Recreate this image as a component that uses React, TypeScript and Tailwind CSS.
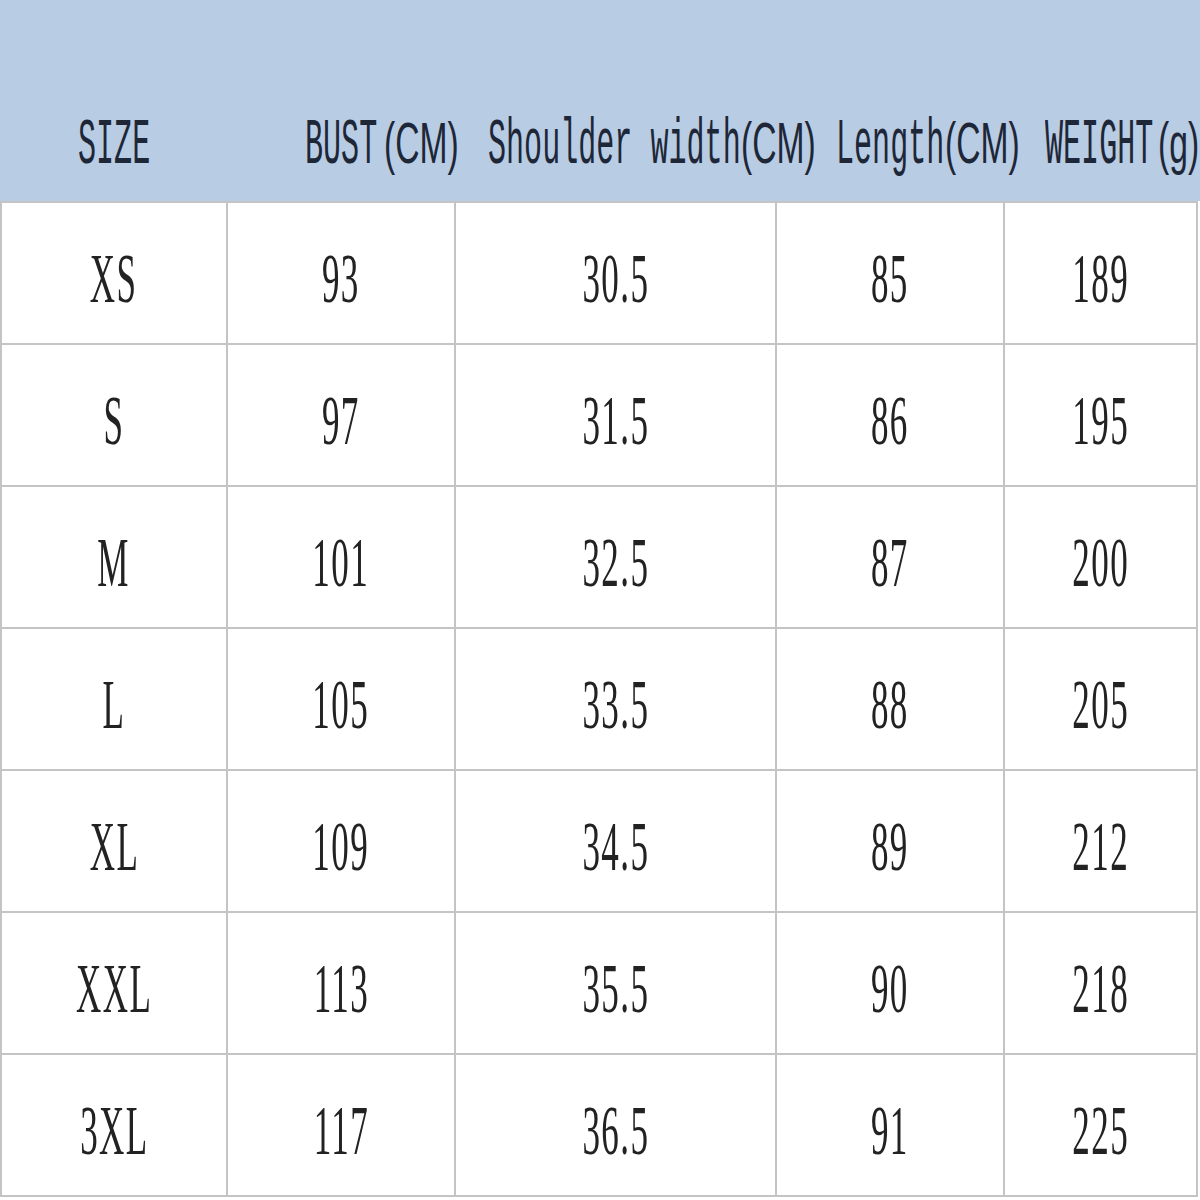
import React from "react";

type Row = [string, string, string, string, string];

const rows: Row[] = [
  ["XS", "93", "30.5", "85", "189"],
  ["S", "97", "31.5", "86", "195"],
  ["M", "101", "32.5", "87", "200"],
  ["L", "105", "33.5", "88", "205"],
  ["XL", "109", "34.5", "89", "212"],
  ["XXL", "113", "35.5", "90", "218"],
  ["3XL", "117", "36.5", "91", "225"],
];

// header pieces: [text, box width, mono?]
const head: [string, string, boolean][] = [
  ["SIZE", "w-[227px]", true],
  ["BUST", "w-[79px]", true],
  ["(CM)", "w-[104px]", false],
  ["Shoulder width", "w-[253px]", true],
  ["(CM)", "w-[95px]", false],
  ["Length", "w-[109px]", true],
  ["(CM)", "w-[100px]", false],
  ["WEIGHT", "w-[113px]", true],
  ["(g)", "w-[40px]", false],
];

export default function App() {
  return (
    <div className="w-[1200px] h-[1200px] overflow-hidden bg-white">
      <div className="h-[201px] bg-[#b8cce4] flex items-baseline pt-[114px] pl-[78px] whitespace-nowrap text-[#1e2737]">
        {head.map(([t, w, mono], i) => (
          <div key={i} className={`${w} shrink-0`}>
            {mono ? (
              <span className="inline-block origin-left scale-x-[0.47] text-[64px] leading-none font-['Liberation_Mono',monospace] whitespace-pre">
                {t}
              </span>
            ) : (
              <span className="inline-block origin-left scale-x-[0.58] text-[58px] leading-none font-['Liberation_Sans',sans-serif]">
                {t}
              </span>
            )}
          </div>
        ))}
      </div>

      <div className="w-[1198px] border-l-2 border-t-2 border-[#c4c4c4] grid grid-cols-[226px_228px_321px_228px_193px] font-['Liberation_Serif',serif] text-[#222222]">
        {rows.map((r, ri) =>
          r.map((c, ci) => (
            <div
              key={`${ri}-${ci}`}
              className="h-[142px] border-r-2 border-b-2 border-[#c4c4c4] flex items-center justify-center pt-3"
            >
              <span className="inline-block scale-x-[0.5] text-[70px] leading-none tracking-[0.04em]">
                {c}
              </span>
            </div>
          ))
        )}
      </div>
    </div>
  );
}
